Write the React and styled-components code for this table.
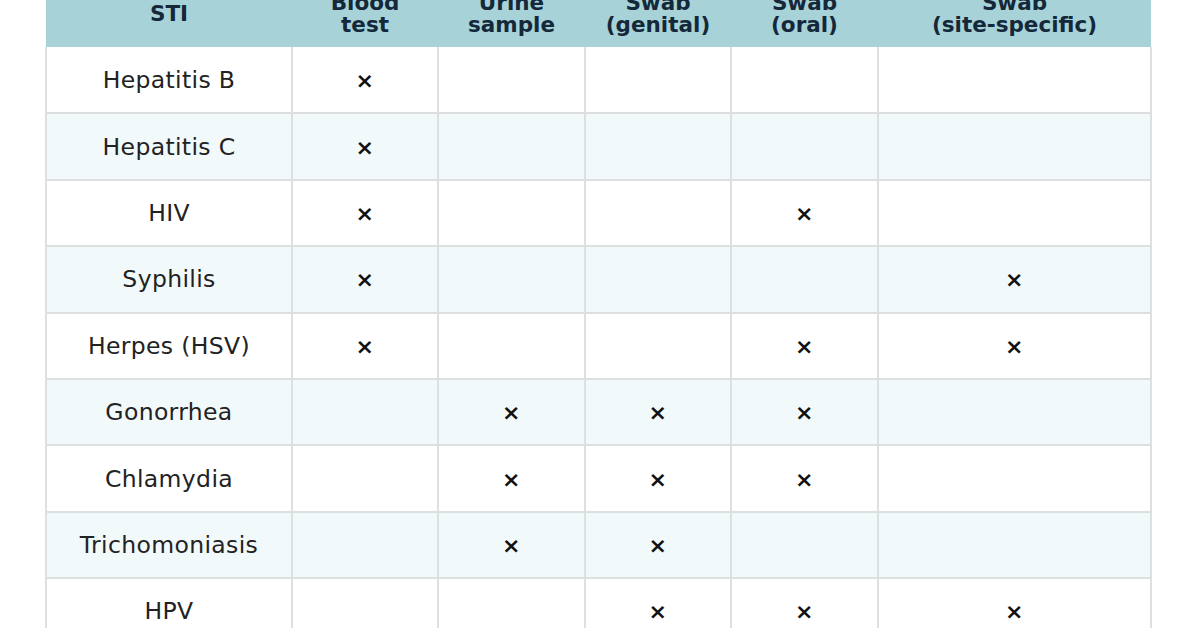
import React from "react";
import styled, { createGlobalStyle } from "styled-components";

const GlobalStyle = createGlobalStyle`
  html, body {
    margin: 0;
    padding: 0;
    background: #ffffff;
    overflow: hidden;
  }
  body {
    font-family: "DejaVu Sans", Verdana, sans-serif;
  }
`;

const Page = styled.div`
  width: 1196px;
  height: 628px;
  overflow: hidden;
  padding-left: 45px;
  box-sizing: border-box;
`;

const Table = styled.table`
  margin-top: -20px;
  border-collapse: collapse;
  table-layout: fixed;
  width: 1105px;
  font-family: "DejaVu Sans", Verdana, sans-serif;
`;

const HeadCell = styled.th`
  background: #a7d3d8;
  color: #14283a;
  font-weight: bold;
  font-size: 21.5px;
  line-height: 22px;
  height: 67px;
  padding: 0 4px;
  text-align: center;
  vertical-align: middle;
  border: none;
  box-sizing: border-box;
`;

const Row = styled.tr`
  background: ${(p) => (p.$alt ? "#f2f9fa" : "#ffffff")};
`;

const Cell = styled.td`
  height: 66.4px;
  box-sizing: border-box;
  padding: 0;
  text-align: center;
  vertical-align: middle;
  border: 2px solid #dedfe0;
  border-top: none;
  font-size: 23.5px;
  letter-spacing: 0.35px;
  color: #222222;
`;

const Mark = styled.span`
  font-weight: bold;
  font-size: 22px;
  color: #111111;
`;

const cols = [
  { w: 246, label: ["STI"] },
  { w: 146, label: ["Blood", "test"] },
  { w: 147, label: ["Urine", "sample"] },
  { w: 146, label: ["Swab", "(genital)"] },
  { w: 147, label: ["Swab", "(oral)"] },
  { w: 273, label: ["Swab", "(site-specific)"] },
];

const rows = [
  ["Hepatitis B", 1, 0, 0, 0, 0],
  ["Hepatitis C", 1, 0, 0, 0, 0],
  ["HIV", 1, 0, 0, 1, 0],
  ["Syphilis", 1, 0, 0, 0, 1],
  ["Herpes (HSV)", 1, 0, 0, 1, 1],
  ["Gonorrhea", 0, 1, 1, 1, 0],
  ["Chlamydia", 0, 1, 1, 1, 0],
  ["Trichomoniasis", 0, 1, 1, 0, 0],
  ["HPV", 0, 0, 1, 1, 1],
];

export default function App() {
  return (
    <>
      <GlobalStyle />
      <Page>
        <Table>
          <colgroup>
            {cols.map((c, i) => (
              <col key={i} style={{ width: c.w }} />
            ))}
          </colgroup>
          <thead>
            <tr>
              {cols.map((c, i) => (
                <HeadCell key={i}>
                  {c.label.map((l, j) => (
                    <React.Fragment key={j}>
                      {j > 0 && <br />}
                      {l}
                    </React.Fragment>
                  ))}
                </HeadCell>
              ))}
            </tr>
          </thead>
          <tbody>
            {rows.map((r, i) => (
              <Row key={i} $alt={i % 2 === 1}>
                <Cell>{r[0]}</Cell>
                {r.slice(1).map((v, j) => (
                  <Cell key={j}>{v ? <Mark>×</Mark> : null}</Cell>
                ))}
              </Row>
            ))}
          </tbody>
        </Table>
      </Page>
    </>
  );
}
